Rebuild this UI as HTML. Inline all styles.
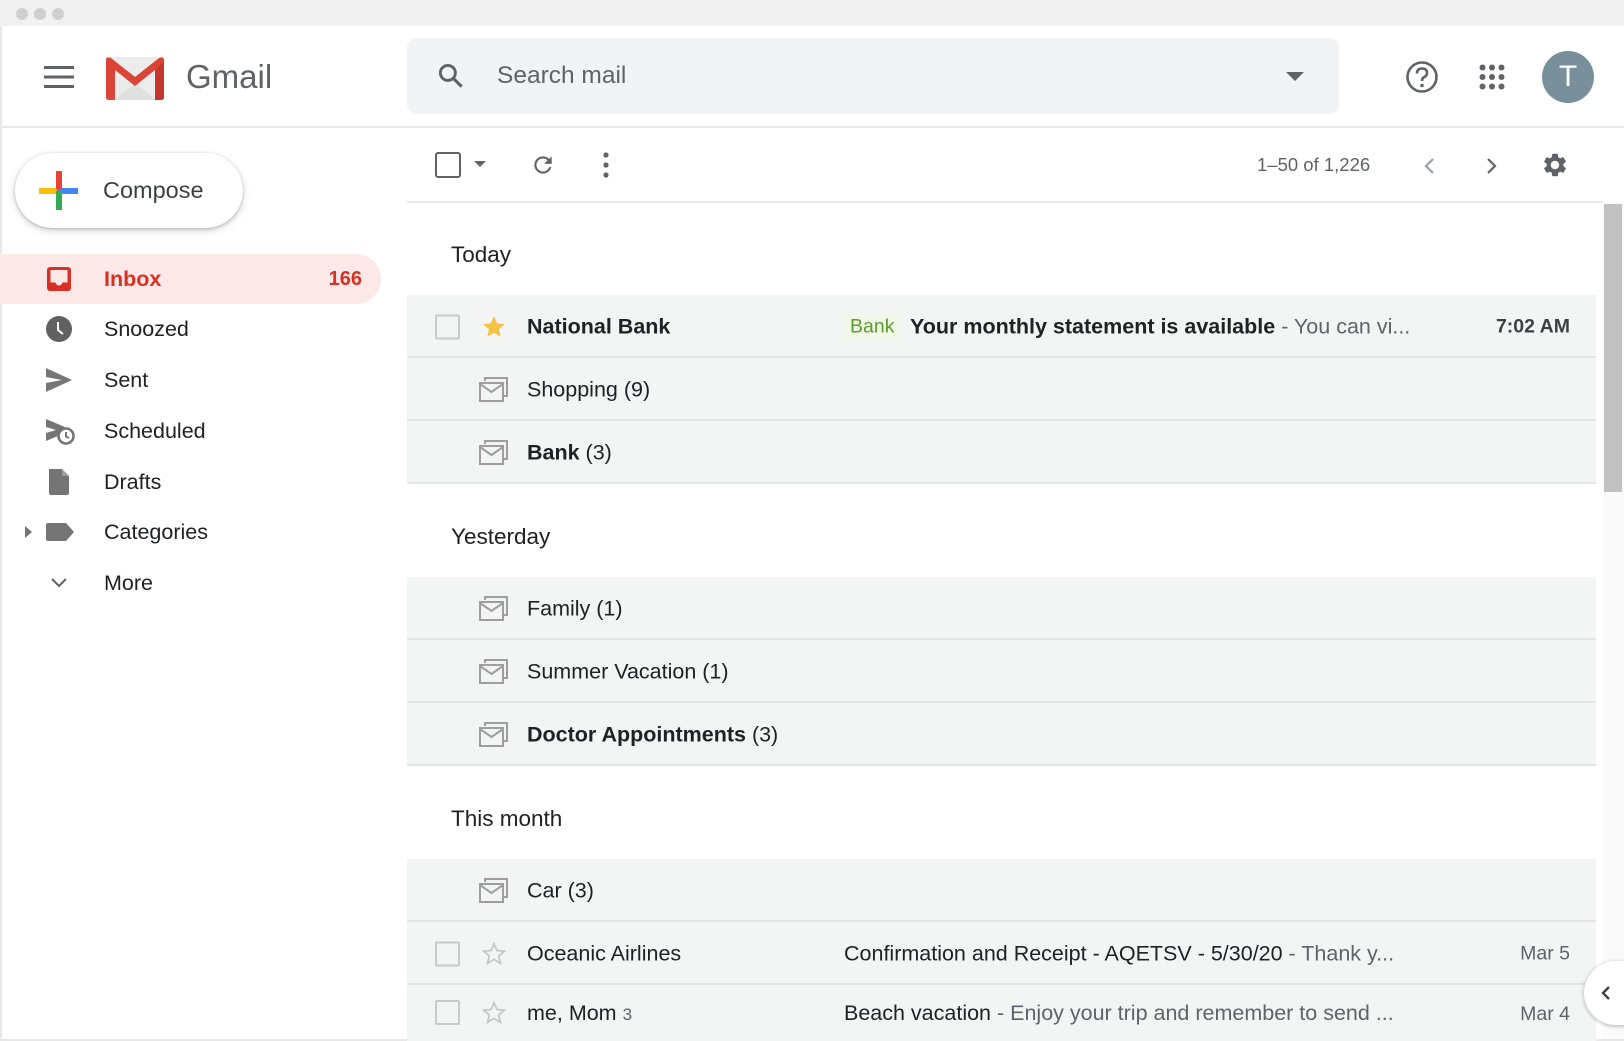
<!DOCTYPE html>
<html><head><meta charset="utf-8"><style>
*{box-sizing:border-box;margin:0;padding:0}
body{width:1624px;height:1041px;overflow:hidden;background:#fff;font-family:"Liberation Sans",Arial,sans-serif;color:#202124;position:relative}
.a{position:absolute}
.tb{left:0;top:0;width:1624px;height:26px;background:#f1f1f1}
.dot{width:12px;height:12px;border-radius:50%;background:#cfcfcf;top:8px}
.nav{left:0;width:381px;height:50px;font-size:21.5px;display:flex;align-items:center}
.nav .t{position:absolute;left:104px}
.nav svg{position:absolute;left:45px}
.row{left:407px;width:1189px;height:63px;background:#f3f5f5;font-size:21.5px}
.sep{left:407px;width:1189px;height:2px;background:#e2e5e8}
.row .c{position:absolute;top:50%;transform:translateY(-50%)}
.hd{left:451px;font-size:22.5px;color:#202124}
.cb{width:25px;height:25px;border:2px solid #c8cacc;border-radius:2px;left:28px}
.b{font-weight:bold}
.g{color:#5f6368}
</style></head><body>
<div class="a tb"></div>
<div class="a dot" style="left:16px"></div><div class="a dot" style="left:34px"></div><div class="a dot" style="left:52px"></div>
<div class="a" style="left:0;top:26px;width:2px;height:1015px;background:#e8e8e8"></div>
<div class="a" style="left:0;top:1039px;width:1624px;height:2px;background:#e8e8e8"></div>
<!-- header -->
<svg class="a" style="left:44px;top:65px" width="30" height="24" viewBox="0 0 30 24"><rect y="1" width="30" height="3" fill="#5f6368"/><rect y="10.5" width="30" height="3" fill="#5f6368"/><rect y="20" width="30" height="3" fill="#5f6368"/></svg>
<svg class="a" style="left:106px;top:57px" width="58" height="43" viewBox="0 0 58 43">
<rect x="0" y="0" width="58" height="43" rx="3" fill="#ececec"/>
<path d="M8 43 L29 26 L50 43Z" fill="#e0e0e0"/>
<path d="M0 3 L0 40 Q0 43 3 43 L9 43 L9 13 L29 29 L49 13 L49 43 L55 43 Q58 43 58 40 L58 3 Q58 -1 53 1 L29 20 L5 1 Q0 -1 0 3Z" fill="#db4437"/>
<path d="M49 13 L49 43 L55 43 Q58 43 58 40 L58 5Z" fill="#c5372c"/>
</svg>
<div class="a" style="left:186px;top:58px;font-size:33px;color:#5f6368">Gmail</div>
<div class="a" style="left:407px;top:38px;width:932px;height:76px;background:#f1f3f4;border-radius:10px"></div>
<svg class="a" style="left:436px;top:61px" width="30" height="30" viewBox="0 0 24 24"><circle cx="9.5" cy="9.5" r="6" fill="none" stroke="#5f6368" stroke-width="2.3"/><path d="M14 14 L20.5 20.5" stroke="#5f6368" stroke-width="2.5"/></svg>
<div class="a" style="left:497px;top:62px;font-size:24.5px;color:#5f6368">Search mail</div>
<svg class="a" style="left:1286px;top:72px" width="18" height="10"><path d="M0 0 L18 0 L9 9Z" fill="#5f6368"/></svg>
<svg class="a" style="left:1405px;top:60px" width="34" height="34" viewBox="0 0 34 34"><circle cx="17" cy="17" r="14.5" fill="none" stroke="#5f6368" stroke-width="2.6"/><path d="M12 13.5 Q12 8.5 17 8.5 Q22 8.5 22 13 Q22 16 18.5 17.5 Q17 18.5 17 21" fill="none" stroke="#5f6368" stroke-width="2.6"/><circle cx="17" cy="25.5" r="1.8" fill="#5f6368"/></svg>
<svg class="a" style="left:1479px;top:64px" width="26" height="26" viewBox="0 0 26 26" fill="#5f6368"><circle cx="3.5" cy="3.5" r="3"/><circle cx="13" cy="3.5" r="3"/><circle cx="22.5" cy="3.5" r="3"/><circle cx="3.5" cy="13" r="3"/><circle cx="13" cy="13" r="3"/><circle cx="22.5" cy="13" r="3"/><circle cx="3.5" cy="22.5" r="3"/><circle cx="13" cy="22.5" r="3"/><circle cx="22.5" cy="22.5" r="3"/></svg>
<div class="a" style="left:1542px;top:51px;width:52px;height:52px;border-radius:50%;background:#78909c;color:#fff;font-size:30px;text-align:center;line-height:52px">T</div>
<div class="a" style="left:2px;top:126px;width:1622px;height:2px;background:#e6e8ea"></div>
<!-- compose -->
<div class="a" style="left:15px;top:153px;width:228px;height:75px;border-radius:38px;background:#fff;box-shadow:0 1px 3px rgba(60,64,67,.3),0 3px 8px rgba(60,64,67,.18)"></div>
<svg class="a" style="left:39px;top:171px" width="40" height="40" viewBox="0 0 40 40"><rect x="0" y="17" width="18" height="6" fill="#fbbc04"/><rect x="18" y="17" width="21" height="6" fill="#4285f4"/><rect x="17" y="0" width="6" height="18" fill="#ea4335"/><rect x="17" y="20" width="6" height="19" fill="#34a853"/></svg>
<div class="a" style="left:103px;top:177px;font-size:23.5px;color:#3c4043">Compose</div>
<!-- nav -->
<div class="a nav" style="top:254px;background:#fce8e6;border-radius:0 25px 25px 0;color:#d93025;font-weight:bold">
<svg width="28" height="28" viewBox="0 0 28 28"><rect x="2" y="2" width="24" height="24" rx="3" fill="#d93025"/><path d="M5.5 5 L22.5 5 L22.5 17.5 L17.5 17.5 Q16.5 20.5 14 20.5 Q11.5 20.5 10.5 17.5 L5.5 17.5Z" fill="#fce8e6"/></svg>
<span class="t">Inbox</span><span style="position:absolute;right:19px;font-size:20px">166</span></div>
<div class="a nav" style="top:304px"><svg width="28" height="28" viewBox="0 0 28 28"><circle cx="14" cy="14" r="13" fill="#616161"/><path d="M13 7 L13 15 L18 19" fill="none" stroke="#fff" stroke-width="2"/></svg><span class="t">Snoozed</span></div>
<div class="a nav" style="top:355px"><svg width="28" height="28" viewBox="0 0 28 28"><path d="M1 2 L27 14 L1 26 L1 17 L17 14 L1 11Z" fill="#757575"/></svg><span class="t">Sent</span></div>
<div class="a nav" style="top:406px"><svg width="30" height="30" viewBox="0 0 30 30"><path d="M1 3 L20 11 Q14 14 13 20 L1 25 L1 17 L11 14 L1 11Z" fill="#757575"/><circle cx="21" cy="20" r="7.5" fill="#fff" stroke="#757575" stroke-width="2.6"/><path d="M21 16 L21 20.5 L24 22" fill="none" stroke="#757575" stroke-width="2"/></svg><span class="t">Scheduled</span></div>
<div class="a nav" style="top:457px"><svg width="28" height="28" viewBox="0 0 28 28"><path d="M4 1 L17 1 L24 8 L24 25 Q24 27 22 27 L6 27 Q4 27 4 25Z" fill="#757575"/><path d="M17 1 L17 8 L24 8" fill="#9e9e9e"/></svg><span class="t">Drafts</span></div>
<div class="a nav" style="top:507px"><svg style="left:24px" width="10" height="14"><path d="M1 1 L8 7 L1 13Z" fill="#757575"/></svg><svg width="30" height="28" viewBox="0 0 30 28"><path d="M3 5 L21 5 L29 14 L21 23 L3 23 Q1 23 1 21 L1 7 Q1 5 3 5Z" fill="#757575"/></svg><span class="t">Categories</span></div>
<div class="a nav" style="top:558px"><svg style="left:50px" width="18" height="12"><path d="M2 2 L9 9 L16 2" fill="none" stroke="#5f6368" stroke-width="2"/></svg><span class="t">More</span></div>
<!-- toolbar -->
<div class="a" style="left:435px;top:152px;width:26px;height:26px;border:2.5px solid #5f6368;border-radius:3px"></div>
<svg class="a" style="left:474px;top:161px" width="12" height="7"><path d="M0 0 L12 0 L6 6Z" fill="#5f6368"/></svg>
<svg class="a" style="left:530px;top:152px" width="26" height="26" viewBox="0 0 24 24"><path d="M17.65 6.35A7.96 7.96 0 0 0 12 4a8 8 0 1 0 7.73 10h-2.08A6 6 0 1 1 12 6c1.66 0 3.14.69 4.22 1.78L13 11h7V4z" fill="#5f6368"/></svg>
<svg class="a" style="left:602px;top:152px" width="8" height="26"><circle cx="4" cy="3" r="2.6" fill="#5f6368"/><circle cx="4" cy="13" r="2.6" fill="#5f6368"/><circle cx="4" cy="23" r="2.6" fill="#5f6368"/></svg>
<div class="a" style="left:1257px;top:154px;font-size:18.5px;color:#5f6368">1–50 of 1,226</div>
<svg class="a" style="left:1423px;top:157px" width="12" height="18"><path d="M10 2 L3 9 L10 16" fill="none" stroke="#9aa0a6" stroke-width="2.2"/></svg>
<svg class="a" style="left:1486px;top:157px" width="12" height="18"><path d="M2 2 L9 9 L2 16" fill="none" stroke="#5f6368" stroke-width="2.2"/></svg>
<svg class="a" style="left:1541px;top:151px" width="28" height="28" viewBox="0 0 24 24"><path fill="#5f6368" d="M19.14 12.94c.04-.3.06-.61.06-.94 0-.32-.02-.64-.07-.94l2.030-1.58a.49.49 0 0 0 .12-.61l-1.92-3.32a.488.488 0 0 0-.59-.22l-2.39.96c-.5-.38-1.03-.7-1.62-.94l-.36-2.54a.484.484 0 0 0-.48-.41h-3.840c-.24 0-.43.17-.47.41l-.36 2.54c-.59.24-1.13.57-1.62.94l-2.39-.96c-.22-.08-.47 0-.59.22L2.74 8.87c-.12.21-.08.47.12.61l2.03 1.58c-.05.3-.09.63-.09.94s.02.64.07.94l-2.03 1.58a.49.49 0 0 0-.12.61l1.92 3.32c.12.22.37.29.59.22l2.39-.96c.5.38 1.03.7 1.62.94l.36 2.54c.05.24.24.41.48.41h3.84c.24 0 .44-.17.47-.41l.36-2.54c.59-.24 1.13-.56 1.62-.94l2.39.96c.22.08.47 0 .59-.22l1.92-3.32c.12-.22.07-.47-.12-.61l-2.01-1.58zM12 15.6c-1.98 0-3.6-1.62-3.6-3.6s1.62-3.6 3.6-3.6 3.6 1.62 3.6 3.6-1.62 3.6-3.6 3.6z"/></svg>
<div class="a" style="left:407px;top:201px;width:1196px;height:2px;background:#e6e8ea"></div>
<!-- scrollbar -->
<div class="a" style="left:1603px;top:203px;width:21px;height:836px;background:#fafafa"></div>
<div class="a" style="left:1604px;top:204px;width:18px;height:288px;background:#c1c1c1"></div>
<!-- list -->
<div class="a hd" style="top:242px">Today</div>
<div class="a row" style="top:295px">
<div class="a cb c"></div>
<svg class="a c" style="left:74px" width="26" height="26" viewBox="0 0 24 24"><path d="M12 2 L14.9 8.6 L22 9.3 L16.6 14 L18.2 21 L12 17.3 L5.8 21 L7.4 14 L2 9.3 L9.1 8.6Z" fill="#f6c244"/></svg>
<span class="c b" style="left:120px">National Bank</span>
<span class="c" style="left:437px;background:#f1f8e9;color:#5d9b2a;font-size:19.5px;padding:3px 6px;border-radius:4px">Bank</span>
<span class="c" style="left:503px;white-space:nowrap"><b>Your monthly statement is available</b><span class="g"> - You can vi...</span></span>
<span class="c b" style="right:26px;font-size:19.5px;color:#3c4043">7:02 AM</span></div>
<div class="a sep" style="top:356px"></div>
<div class="a row" style="top:358px"><svg class="a c" style="left:72px" width="30" height="26" viewBox="0 0 30 26"><path d="M6 4 L6 1 L28 1 L28 19 L25 19" fill="none" stroke="#9e9e9e" stroke-width="2"/><rect x="1" y="6" width="23" height="18" fill="none" stroke="#9e9e9e" stroke-width="2"/><path d="M1 7 L12.5 15 L24 7" fill="none" stroke="#9e9e9e" stroke-width="2"/></svg><span class="c" style="left:120px">Shopping (9)</span></div>
<div class="a sep" style="top:419px"></div>
<div class="a row" style="top:421px"><svg class="a c" style="left:72px" width="30" height="26" viewBox="0 0 30 26"><path d="M6 4 L6 1 L28 1 L28 19 L25 19" fill="none" stroke="#9e9e9e" stroke-width="2"/><rect x="1" y="6" width="23" height="18" fill="none" stroke="#9e9e9e" stroke-width="2"/><path d="M1 7 L12.5 15 L24 7" fill="none" stroke="#9e9e9e" stroke-width="2"/></svg><span class="c" style="left:120px"><b>Bank</b> (3)</span></div>
<div class="a sep" style="top:482px"></div>
<div class="a hd" style="top:524px">Yesterday</div>
<div class="a row" style="top:577px"><svg class="a c" style="left:72px" width="30" height="26" viewBox="0 0 30 26"><path d="M6 4 L6 1 L28 1 L28 19 L25 19" fill="none" stroke="#9e9e9e" stroke-width="2"/><rect x="1" y="6" width="23" height="18" fill="none" stroke="#9e9e9e" stroke-width="2"/><path d="M1 7 L12.5 15 L24 7" fill="none" stroke="#9e9e9e" stroke-width="2"/></svg><span class="c" style="left:120px">Family (1)</span></div>
<div class="a sep" style="top:638px"></div>
<div class="a row" style="top:640px"><svg class="a c" style="left:72px" width="30" height="26" viewBox="0 0 30 26"><path d="M6 4 L6 1 L28 1 L28 19 L25 19" fill="none" stroke="#9e9e9e" stroke-width="2"/><rect x="1" y="6" width="23" height="18" fill="none" stroke="#9e9e9e" stroke-width="2"/><path d="M1 7 L12.5 15 L24 7" fill="none" stroke="#9e9e9e" stroke-width="2"/></svg><span class="c" style="left:120px">Summer Vacation (1)</span></div>
<div class="a sep" style="top:701px"></div>
<div class="a row" style="top:703px"><svg class="a c" style="left:72px" width="30" height="26" viewBox="0 0 30 26"><path d="M6 4 L6 1 L28 1 L28 19 L25 19" fill="none" stroke="#9e9e9e" stroke-width="2"/><rect x="1" y="6" width="23" height="18" fill="none" stroke="#9e9e9e" stroke-width="2"/><path d="M1 7 L12.5 15 L24 7" fill="none" stroke="#9e9e9e" stroke-width="2"/></svg><span class="c" style="left:120px"><b>Doctor Appointments</b> (3)</span></div>
<div class="a sep" style="top:764px"></div>
<div class="a hd" style="top:806px">This month</div>
<div class="a row" style="top:859px"><svg class="a c" style="left:72px" width="30" height="26" viewBox="0 0 30 26"><path d="M6 4 L6 1 L28 1 L28 19 L25 19" fill="none" stroke="#9e9e9e" stroke-width="2"/><rect x="1" y="6" width="23" height="18" fill="none" stroke="#9e9e9e" stroke-width="2"/><path d="M1 7 L12.5 15 L24 7" fill="none" stroke="#9e9e9e" stroke-width="2"/></svg><span class="c" style="left:120px">Car (3)</span></div>
<div class="a sep" style="top:920px"></div>
<div class="a row" style="top:922px">
<div class="a cb c"></div>
<svg class="a c" style="left:74px" width="26" height="26" viewBox="0 0 24 24"><path d="M12 2.5 L14.7 8.8 L21.5 9.4 L16.3 13.9 L17.9 20.6 L12 17 L6.1 20.6 L7.7 13.9 L2.5 9.4 L9.3 8.8Z" fill="none" stroke="#c4c6c8" stroke-width="1.6"/></svg>
<span class="c" style="left:120px">Oceanic Airlines</span>
<span class="c" style="left:437px;white-space:nowrap">Confirmation and Receipt - AQETSV - 5/30/20<span class="g"> - Thank y...</span></span>
<span class="c g" style="right:26px;font-size:19.5px">Mar 5</span></div>
<div class="a sep" style="top:983px"></div>
<div class="a row" style="top:985px;height:56px">
<div class="a cb" style="top:15px"></div>
<svg class="a" style="left:74px;top:15px" width="26" height="26" viewBox="0 0 24 24"><path d="M12 2.5 L14.7 8.8 L21.5 9.4 L16.3 13.9 L17.9 20.6 L12 17 L6.1 20.6 L7.7 13.9 L2.5 9.4 L9.3 8.8Z" fill="none" stroke="#c4c6c8" stroke-width="1.6"/></svg>
<span class="a" style="left:120px;top:16px">me, Mom <span class="g" style="font-size:17px">3</span></span>
<span class="a" style="left:437px;top:16px;white-space:nowrap">Beach vacation<span class="g"> - Enjoy your trip and remember to send ...</span></span>
<span class="a g" style="right:26px;top:18px;font-size:19.5px">Mar 4</span></div>
<div class="a" style="left:1584px;top:961px;width:60px;height:64px;border-radius:32px 0 0 32px;background:#fff;box-shadow:0 1px 4px rgba(0,0,0,.3)"></div>
<svg class="a" style="left:1600px;top:985px" width="12" height="16"><path d="M9 2 L3 8 L9 14" fill="none" stroke="#3c4043" stroke-width="2.4"/></svg>
</body></html>
